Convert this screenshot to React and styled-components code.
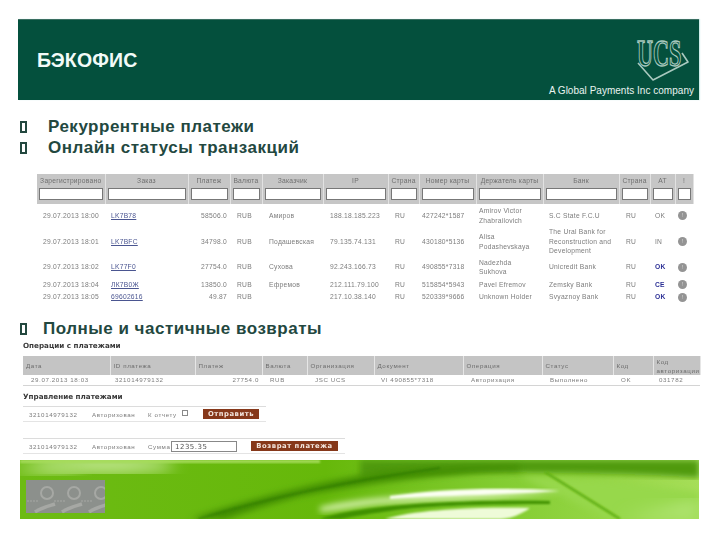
import React from 'react'
import styled, { createGlobalStyle } from 'styled-components'

const Global = createGlobalStyle`
  html, body { margin: 0; padding: 0; background: #fff; }
  body { font-family: "Liberation Sans", Arial, sans-serif; }
`

const Slide = styled.div`
  width: 720px;
  height: 540px;
  box-sizing: border-box;
  padding: 19px 21px 0 18px;
  overflow: hidden;
  display: flex;
  flex-direction: column;
`

const Header = styled.header`
  height: 81px;
  box-sizing: border-box;
  background: #04503d;
  border-top: 1px solid #3b6f62;
  box-shadow: 1px 0 1px #cfeeea;
  padding: 0 5px 0 19px;
  display: grid;
  grid-template-columns: 1fr auto;
  grid-template-rows: 1fr auto;
  color: #fff;
`

const Title = styled.h1`
  margin: 25px 0 0;
  font-size: 19.5px;
  line-height: 30px;
  font-weight: 700;
  letter-spacing: 0.2px;
  color: #f2fbf8;
`

const Logo = styled.svg`
  width: 62px;
  height: 58px;
  margin: 8px 3px -6px 0;
  justify-self: end;
`

const Tagline = styled.div`
  grid-column: 1 / 3;
  justify-self: end;
  font-size: 10px;
  line-height: 13px;
  margin-bottom: 3px;
  letter-spacing: 0.02px;
  color: #e9f4f0;
`

const Bullets = styled.ul`
  list-style: none;
  margin: ${p => p.$top}px 0 0 2px;
  padding: 0;
  display: flex;
  flex-direction: column;
  gap: 1px;
`

const BulletRow = styled.li`
  display: flex;
  align-items: center;
  height: 20px;
  font-size: 17px;
  font-weight: 700;
  letter-spacing: 0.5px;
  color: #23483f;
`

const Box = styled.span`
  width: 3px;
  height: 8px;
  border: 2px solid #23483f;
  margin-right: ${p => p.$gap}px;
  flex: none;
`

const Table = styled.table`
  border-collapse: collapse;
  table-layout: fixed;
  font-family: "Liberation Sans", sans-serif;
  filter: blur(0.4px);
  color: #7c7c7c;
`

const OrdersTable = styled(Table)`
  width: 656px;
  margin: 16px 0 0 19px;
  font-size: 6.7px;
  letter-spacing: 0.25px;
`

const HeadCell = styled.th`
  background: #c6c6c6;
  border-right: 1px solid #e2e2e2;
  font-weight: 400;
  color: #6f6f6f;
  padding: 0 1px;
  height: 30px;
  text-align: center;
  vertical-align: top;
  white-space: nowrap;
  overflow: hidden;
  line-height: 14px;
`

const Filter = styled.div`
  height: 10px;
  margin: 0 1px;
  background: #fff;
  border: 1px solid #777;
`

const Cell = styled.td`
  padding: 0 3px 0 ${p => p.$pad || 0}px;
  height: ${p => p.$h || 0}px;
  text-align: ${p => p.$align || 'left'};
  line-height: 9.4px;
  white-space: ${p => (p.$wrap ? 'normal' : 'nowrap')};
  overflow: hidden;
`

const OrderLink = styled.span`
  color: #4a5590;
  text-decoration: underline;
`

const Code = styled.span`
  color: ${p => (p.$hot ? '#2b2f95' : 'inherit')};
  font-weight: ${p => (p.$hot ? 700 : 400)};
`

const Info = styled.span`
  display: block;
  width: 9px;
  height: 9px;
  border-radius: 50%;
  background: #949494;
  margin: 0 auto;
  color: #ddd;
  font-size: 5px;
  line-height: 9px;
  text-align: center;
`

const SectionHead = styled.div`
  margin: ${p => p.$top}px 0 0 5px;
  font-family: "DejaVu Sans", sans-serif;
  font-size: 7.2px;
  line-height: 10px;
  font-weight: 700;
  color: #3a3a3a;
  filter: blur(0.25px);
`

const OpsTable = styled(Table)`
  width: 677px;
  margin: 5px 0 0 5px;
  font-size: 6.2px;
  letter-spacing: 0.6px;
`

const OpsHead = styled.th`
  background: #c4c4c4;
  border-right: 1px solid #e6e6e6;
  font-weight: 400;
  color: #6c6c6c;
  text-align: left;
  padding: 0 0 0 3px;
  height: 19px;
  line-height: 9px;
`

const OpsCell = styled.td`
  height: 10px;
  line-height: 10px;
  padding: 0 3px 0 ${p => p.$pad || 0}px;
  text-align: ${p => p.$align || 'left'};
  border-bottom: 1px solid #d4d4d4;
  white-space: nowrap;
`

const ManageRow = styled.div`
  width: ${p => p.$w}px;
  height: 16px;
  margin: ${p => p.$top}px 0 0 5px;
  box-sizing: border-box;
  border-top: 1px solid #dcdcdc;
  border-bottom: 1px solid #e4e4e4;
  display: flex;
  align-items: center;
  padding-left: 6px;
  font-family: "Liberation Sans", sans-serif;
  font-size: 6.2px;
  letter-spacing: 0.6px;
  color: #7b7b7b;
  filter: blur(0.3px);
`

const ManageText = styled.span`
  width: ${p => p.$w}px;
  flex: none;
  white-space: nowrap;
`

const Check = styled.span`
  width: 4px;
  height: 4px;
  border: 1px solid #8a8a8a;
  margin: -3px 0 0 -1px;
  flex: none;
`

const ActionButton = styled.span`
  background: #86381a;
  color: #f4e6de;
  font-family: "DejaVu Sans", sans-serif;
  font-weight: 700;
  font-size: 6.8px;
  letter-spacing: 0.55px;
  height: 10px;
  line-height: 10px;
  text-align: center;
  width: ${p => p.$w}px;
  margin-left: ${p => p.$left}px;
  flex: none;
`

const Amount = styled.span`
  width: 66px;
  height: 11px;
  border: 1px solid #888;
  font-family: "DejaVu Sans", sans-serif;
  font-size: 7px;
  line-height: 10px;
  color: #555;
  padding-left: 3px;
  box-sizing: border-box;
  letter-spacing: 0.5px;
  flex: none;
`

const Footer = styled.footer`
  position: relative;
  width: 679px;
  height: 59px;
  margin: 6px 0 0 2px;
  overflow: hidden;
  background: linear-gradient(90deg, #6dbb14 0%, #66b80a 45%, #82cc30 70%, #a6de58 100%);
`

const Swoosh = styled.svg`
  display: block;
  width: 100%;
  height: 100%;
`

const Badge = styled.svg`
  position: absolute;
  left: 6px;
  top: 20px;
  width: 79px;
  height: 33px;
`

const ordersCols = [68, 83, 42, 32, 61, 65, 31, 57, 67, 76, 31, 25, 18]
const ordersHead = ['Зарегистрировано', 'Заказ', 'Платеж', 'Валюта', 'Заказчик', 'IP', 'Страна', 'Номер карты', 'Держатель карты', 'Банк', 'Страна', 'AT', '!']

const orders = [
  { h: 23, date: '29.07.2013 18:00', id: 'LK7B78', sum: '58506.0', cur: 'RUB', name: 'Амиров', ip: '188.18.185.223', c: 'RU', card: '427242*1587', holder: 'Amirov Victor Zhabrailovich', bank: 'S.C State F.C.U', code: 'OK' },
  { h: 29, date: '29.07.2013 18:01', id: 'LK7BFC', sum: '34798.0', cur: 'RUB', name: 'Подашевская', ip: '79.135.74.131', c: 'RU', card: '430180*5136', holder: 'Alisa Podashevskaya', bank: 'The Ural Bank for Reconstruction and Development', code: 'IN' },
  { h: 22, date: '29.07.2013 18:02', id: 'LK77F0', sum: '27754.0', cur: 'RUB', name: 'Сухова', ip: '92.243.166.73', c: 'RU', card: '490855*7318', holder: 'Nadezhda Sukhova', bank: 'Unicredit Bank', code: 'OK', hot: true },
  { h: 13, date: '29.07.2013 18:04', id: 'ЛК7В0Ж', sum: '13850.0', cur: 'RUB', name: 'Ефремов', ip: '212.111.79.100', c: 'RU', card: '515854*5943', holder: 'Pavel Efremov', bank: 'Zemsky Bank', code: 'CE', hot: true },
  { h: 12, date: '29.07.2013 18:05', id: '69602616', sum: '49.87', cur: 'RUB', name: '', ip: '217.10.38.140', c: 'RU', card: '520339*9666', holder: 'Unknown Holder', bank: 'Svyaznoy Bank', code: 'OK', hot: true },
]

const opsCols = [87, 85, 67, 45, 67, 89, 79, 71, 40, 47]
const opsHead = ['Дата', 'ID платежа', 'Платеж', 'Валюта', 'Организация', 'Документ', 'Операция', 'Статус', 'Код', 'Код авторизации']
const opsRow = [
  ['29.07.2013 18:03', 8],
  ['321014979132', 5],
  ['27754.0', 0, 'right'],
  ['RUB', 8],
  ['JSC UCS', 8],
  ['VI 490855*7318', 7],
  ['Авторизация', 8],
  ['Выполнено', 8],
  ['OK', 8],
  ['031782', 6],
]

const Colgroup = ({ widths }) => (
  <colgroup>
    {widths.map((w, i) => <col key={i} style={{ width: w }} />)}
  </colgroup>
)

const Orders = () => (
  <OrdersTable>
    <Colgroup widths={ordersCols} />
    <thead>
      <tr>
        {ordersHead.map((t, i) => (
          <HeadCell key={i}>
            {t}
            <Filter />
          </HeadCell>
        ))}
      </tr>
    </thead>
    <tbody>
      {orders.map(o => (
        <tr key={o.id}>
          <Cell $h={o.h} $pad={6}>{o.date}</Cell>
          <Cell $pad={6}><OrderLink>{o.id}</OrderLink></Cell>
          <Cell $align="right">{o.sum}</Cell>
          <Cell $pad={7}>{o.cur}</Cell>
          <Cell $pad={7}>{o.name}</Cell>
          <Cell $pad={7}>{o.ip}</Cell>
          <Cell $pad={7}>{o.c}</Cell>
          <Cell $pad={3}>{o.card}</Cell>
          <Cell $pad={3} $wrap>{o.holder}</Cell>
          <Cell $pad={6} $wrap>{o.bank}</Cell>
          <Cell $pad={7}>{o.c}</Cell>
          <Cell $pad={5}><Code $hot={o.hot}>{o.code}</Code></Cell>
          <Cell><Info>!</Info></Cell>
        </tr>
      ))}
    </tbody>
  </OrdersTable>
)

const Operations = () => (
  <OpsTable>
    <Colgroup widths={opsCols} />
    <thead>
      <tr>{opsHead.map(t => <OpsHead key={t}>{t}</OpsHead>)}</tr>
    </thead>
    <tbody>
      <tr>
        {opsRow.map(([text, pad, align]) => (
          <OpsCell key={text} $pad={pad} $align={align}>{text}</OpsCell>
        ))}
      </tr>
    </tbody>
  </OpsTable>
)

const UcsLogo = () => (
  <Logo viewBox="0 0 62 58" fill="none" stroke="#a9c9bf">
    <path d="M9 35 L24 52 L59 34 L53 25" strokeWidth="1.6" strokeLinejoin="round" />
    <text
      transform="translate(8 38) scale(0.6 1)"
      fontFamily="'Liberation Serif', serif"
      fontWeight="700"
      fontSize="37"
      strokeWidth="1.3"
    >
      UCS
    </text>
  </Logo>
)

const GreenSwoosh = () => (
  <Swoosh viewBox="0 0 679 59" preserveAspectRatio="none">
    <defs>
      <filter id="b1"><feGaussianBlur stdDeviation="1.2" /></filter>
      <filter id="b3"><feGaussianBlur stdDeviation="3" /></filter>
      <filter id="b8"><feGaussianBlur stdDeviation="8" /></filter>
    </defs>
    <ellipse cx="85" cy="5" rx="70" ry="7" fill="#d6f2ac" filter="url(#b8)" />
    <ellipse cx="30" cy="8" rx="35" ry="6" fill="#a8dc68" filter="url(#b8)" />
    <rect x="0" y="0" width="300" height="3" fill="#a6dc5c" filter="url(#b1)" />
    <path d="M340 0 H679 V18 C600 12 520 14 470 12 C420 12 370 14 340 18 Z" fill="#4f9a0a" filter="url(#b3)" />
    <path d="M500 16 C570 18 630 26 679 32 V59 H590 Z" fill="#97d84c" filter="url(#b3)" />
    <path d="M170 59 C220 42 290 24 360 12 C400 8 450 6 500 6 L500 10 C420 14 340 24 280 36 C250 44 225 52 205 59 Z" fill="#3f8b05" filter="url(#b3)" />
    <path d="M178 59 C250 38 320 22 420 8" fill="none" stroke="#2f7a04" strokeWidth="1.3" filter="url(#b1)" />
    <path d="M300 47 C320 42 340 40 360 38 C420 34 470 30 540 31 C480 40 420 40 360 44 C340 46 320 50 300 52 Z" fill="#d8f3b0" filter="url(#b3)" />
    <path d="M370 36 C420 29 480 27 540 31 C480 35 420 36 370 39 Z" fill="#fbfff2" filter="url(#b1)" />
    <path d="M340 50 C390 42 470 40 530 41 L530 44 C470 44 400 46 370 51 C355 53 335 56 320 59 H300 C310 55 325 52 340 50 Z" fill="#3f9106" filter="url(#b1)" />
    <path d="M365 59 C395 50 450 47 510 48 C500 55 490 59 480 59 Z" fill="#eefbd8" filter="url(#b1)" />
    <path d="M525 12 L600 59" stroke="#5fae10" strokeWidth="2.5" filter="url(#b1)" />
    <path d="M600 59 L679 40 V59 Z" fill="#b4e678" filter="url(#b8)" />
  </Swoosh>
)

const GreyBadge = () => (
  <Badge viewBox="0 0 79 33">
    <rect width="79" height="33" fill="#8c908c" />
    {[-1, 26, 53].map(x => (
      <g key={x} fill="none" stroke="#a6a8a4" strokeWidth="2" filter="blur(0.5px)">
        <circle cx={x + 22} cy="13" r="6" />
        <path d={`M${x + 10} 32 C${x + 16} 28 ${x + 24} 26 ${x + 30} 24`} strokeWidth="3.5" />
        <path d={`M${x + 2} 21 H${x + 14}`} strokeWidth="1" strokeDasharray="2 1" />
      </g>
    ))}
  </Badge>
)

export default function App() {
  return (
    <>
      <Global />
      <Slide>
        <Header>
          <Title>БЭКОФИС</Title>
          <UcsLogo />
          <Tagline>A Global Payments Inc company</Tagline>
        </Header>
        <Bullets $top={17}>
          <BulletRow><Box $gap={21} />Рекуррентные платежи</BulletRow>
          <BulletRow><Box $gap={21} />Онлайн статусы транзакций</BulletRow>
        </Bullets>
        <Orders />
        <Bullets $top={16}>
          <BulletRow><Box $gap={16} />Полные и частичные возвраты</BulletRow>
        </Bullets>
        <SectionHead $top={2}>Операции с платежами</SectionHead>
        <Operations />
        <SectionHead $top={6}>Управление платежами</SectionHead>
        <ManageRow $w={243} $top={4}>
          <ManageText $w={63}>321014979132</ManageText>
          <ManageText $w={56}>Авторизован</ManageText>
          <ManageText $w={35}>К отчету</ManageText>
          <Check />
          <ActionButton $w={56} $left={15}>Отправить</ActionButton>
        </ManageRow>
        <ManageRow $w={322} $top={16}>
          <ManageText $w={63}>321014979132</ManageText>
          <ManageText $w={56}>Авторизован</ManageText>
          <ManageText $w={23}>Сумма</ManageText>
          <Amount>1235.35</Amount>
          <ActionButton $w={87} $left={14}>Возврат платежа</ActionButton>
        </ManageRow>
        <Footer>
          <GreenSwoosh />
          <GreyBadge />
        </Footer>
      </Slide>
    </>
  )
}
